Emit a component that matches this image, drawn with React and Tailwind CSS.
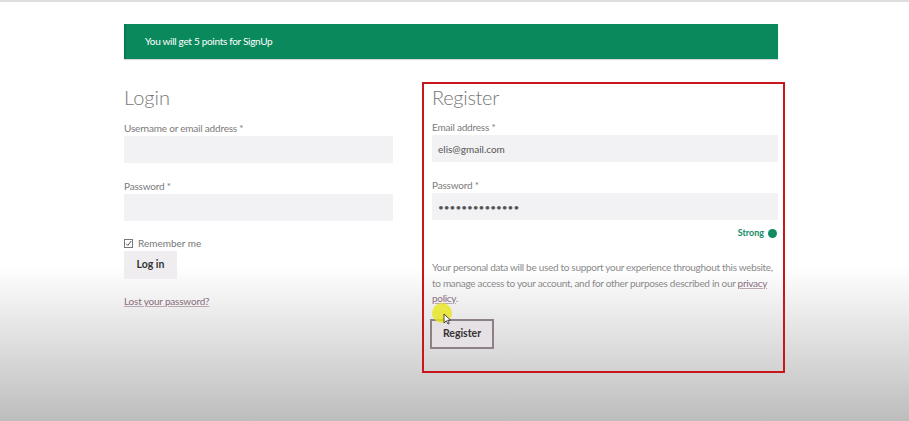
import { useState } from 'react'

const font = { fontFamily: 'Lato, "Open Sans", sans-serif' }

function Field({ label, value, type = 'text', className = '' }) {
  return (
    <div className={className}>
      <label className="block text-[10px] leading-[14px] text-[#7a7a7a] tracking-[-0.2px]">{label}</label>
      <input type={type} defaultValue={value} readOnly
        className="mt-[1px] block w-full h-[27px] bg-[#f2f1f3] px-[6px] text-[10px] text-[#555] outline-none" />
    </div>
  )
}

export default function App() {
  const [remember, setRemember] = useState(true)

  return (
    <div style={font} className="min-h-[421px] border-t-2 border-[#dedede] bg-[linear-gradient(to_bottom,#ffffff_0%,#ffffff_63%,#bdbdbd_100%)] overflow-hidden">
      <div className="ml-[124px] w-[654px] pt-[22px]">
        <div className="h-[35px] flex items-center pl-[19px] bg-[#0a8a5c] border-l-[2px] border-[#087a50] text-white text-[10px] tracking-[-0.3px] shadow-[0_1px_1px_rgba(0,0,0,0.15)]">
          You will get 5 points for SignUp
        </div>

        <div className="flex mt-[23px]">
          {/* login */}
          <div className="w-[269px] shrink-0 pt-[3px]">
            <h2 className="text-[20px] leading-[24px] font-light text-[#777]">Login</h2>
            <Field label="Username or email address *" className="mt-[12px]" />
            <Field label="Password *" type="password" className="mt-[16px]" />
            <label onClick={() => setRemember(r => !r)} className="mt-[15px] flex items-center gap-[5px] text-[10px] leading-[14px] text-[#777] cursor-pointer">
              <svg width="9" height="9" viewBox="0 0 9 9" className="shrink-0">
                <rect x="0.5" y="0.5" width="8" height="8" fill="#fff" stroke="#777" />
                {remember && <path d="M2 4.6 L3.8 6.4 L7.2 2" fill="none" stroke="#555" strokeWidth="1" />}
              </svg>
              Remember me
            </label>
            <button className="mt-[1px] w-[53px] h-[28px] bg-[#efedf0] text-[10.5px] font-bold text-[#333]">Log in</button>
            <a href="#" className="mt-[15px] block text-[10px] leading-[14px] tracking-[-0.2px] text-[#8a6d7d] underline decoration-[#b9a7b1]">Lost your password?</a>
          </div>

          {/* register */}
          <div className="ml-[29px] w-[363px] h-[291px] shrink-0 border-2 border-[#c8161d] pl-[8px] pr-[5px] pt-[1px]">
            <h2 className="text-[20px] leading-[24px] font-light text-[#777] tracking-[-0.3px]">Register</h2>
            <Field label="Email address *" value="elis@gmail.com" className="mt-[11px]" />
            <Field label="Password *" value="••••••••••••••" className="mt-[16px]" />
            <div className="mt-[6px] flex items-center justify-end gap-[4px] pr-[1px] text-[9px] leading-[14px] font-bold text-[#138a64]">
              Strong <span className="w-[9px] h-[9px] rounded-full bg-[#138a64]" />
            </div>
            <p className="mt-[20px] whitespace-nowrap text-[10px] leading-[15.5px] text-[#8a8a8a] tracking-[-0.3px]">
              Your personal data will be used to support your experience throughout this website,<br />
              to manage access to your account, and for other purposes described in our <a href="#" className="text-[#8a6d7d] underline decoration-[#b9a7b1]">privacy</a><br />
              <a href="#" className="text-[#8a6d7d] underline decoration-[#b9a7b1]">policy</a>.
            </p>
            <div className="relative mt-[12px] w-fit">
              <button className="w-[64px] h-[30px] -ml-[2px] bg-[#e6e1e5] border-2 border-[#8c8189] text-[10.5px] font-bold text-[#333]">Register</button>
              <span className="absolute left-[0px] -top-[16px] w-[20px] h-[20px] rounded-full bg-[#e8e61a]/80 pointer-events-none" />
              <svg className="absolute left-[11px] -top-[6px] pointer-events-none" width="8" height="12" viewBox="0 0 8 12">
                <path d="M1 1 L1 10 L3.3 7.8 L5 11 L6.3 10.4 L4.7 7.2 L7.5 7.2 Z" fill="#fff" stroke="#222" strokeWidth="0.8" />
              </svg>
            </div>
          </div>
        </div>
      </div>
    </div>
  )
}
